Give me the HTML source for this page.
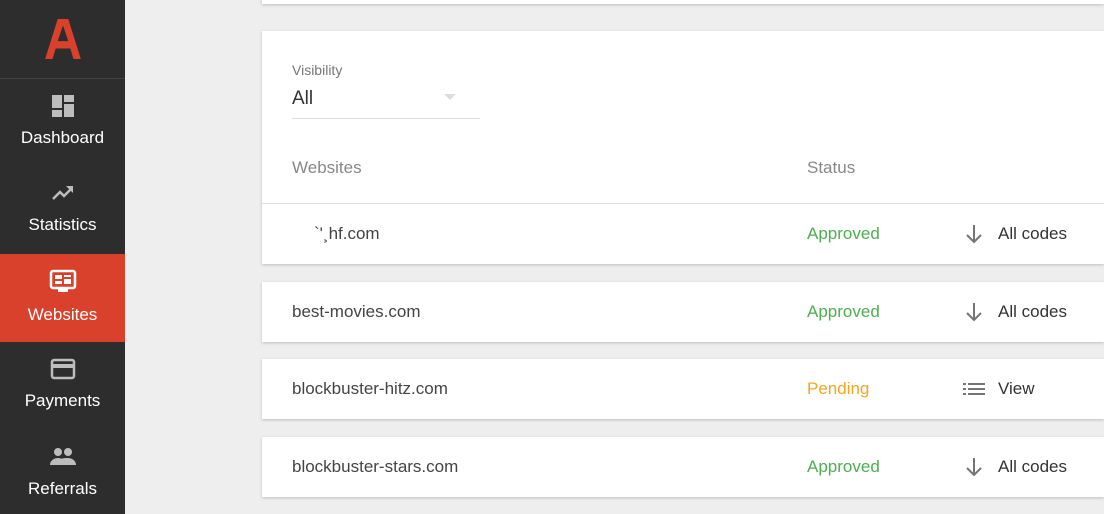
<!DOCTYPE html><html><head><style>
html{overflow:hidden;height:514px}
body{margin:0;width:1104px;height:514px;overflow:hidden;background:#eeeeee;font-family:"Liberation Sans",sans-serif;position:relative}
.sb{position:absolute;left:0;top:0;width:125px;height:514px;background:#2d2d2d}
.logo{height:78px;border-bottom:1px solid #444;display:flex;justify-content:center;align-items:center}
.it{position:absolute;left:0;width:125px;height:88px;text-align:center;color:#fff;font-size:17px}
.it svg{display:block;margin:15px auto 10px}
.card{position:absolute;left:262px;right:0;background:#fff;box-shadow:0 1px 3px rgba(0,0,0,.2)}
.row{height:60px}
.row .n{position:absolute;left:30px;top:20px;font-size:17px;color:#444}
.row .s{position:absolute;left:545px;top:20px;font-size:17px}
.row .a{position:absolute;left:700px;top:18px;font-size:17px;color:#333;display:flex;align-items:center;gap:12px}
.g{color:#4caf50}.o{color:#f5a623}
</style></head><body>
<div class="sb">
<div class="logo"><svg width="42" height="42" viewBox="0 0 40 40"><path d="M3 39 L15 1 H25 L37 39 H30 L27 29 H13 L10 39 Z M15 22 H25 L20 7 Z" fill="#d9412c"/></svg></div>
<div class="it" style="top:79px"><svg width="24" height="24" viewBox="0 0 24 24"><path fill="#bdbdbd" d="M1 1h10v13H1zM13 1h10v7H13zM13 10h10v13H13zM1 16h10v7H1z"/></svg>Dashboard</div>
<div class="it" style="top:166px"><svg width="24" height="24" viewBox="0 0 24 24"><path fill="none" stroke="#bdbdbd" stroke-width="2.5" d="M2 18l7-7 4 4 8-8"/><path fill="#bdbdbd" d="M15 5h7v7z"/></svg>Statistics</div>
<div class="it" style="top:254px;background:#d9412c"><svg width="28" height="26" viewBox="0 0 28 26"><rect x="2" y="2" width="24" height="17" rx="2" fill="none" stroke="#fff" stroke-width="2.5"/><path fill="#fff" d="M6 6h7v4H6zM15 6h7v2h-7zM15 10h7v5h-7zM6 12h7v3H6zM9 19h10v4H9z"/></svg>Websites</div>
<div class="it" style="top:342px"><svg width="26" height="24" viewBox="0 0 26 24"><rect x="2" y="3" width="22" height="18" rx="2" fill="none" stroke="#bdbdbd" stroke-width="2.5"/><rect x="2" y="7" width="22" height="4" fill="#bdbdbd"/></svg>Payments</div>
<div class="it" style="top:430px"><svg width="28" height="24" viewBox="0 0 28 24"><circle cx="9" cy="7" r="4" fill="#bdbdbd"/><circle cx="19" cy="7" r="4" fill="#bdbdbd"/><path fill="#bdbdbd" d="M1 20c0-5 5-7 8-7s8 2 8 7zM15 20c0-3-1-5-3-6 2-1 5-1 7-1 3 0 8 2 8 7z"/></svg>Referrals</div>
</div>
<div class="card" style="top:-10px;height:14px"></div>
<div class="card" style="top:31px;height:233px">
<div style="position:absolute;left:30px;top:31px;font-size:14px;color:#777">Visibility</div>
<div style="position:absolute;left:30px;top:57px;font-size:19px;color:#333">All</div>
<div style="position:absolute;left:182px;top:63px;width:0;height:0;border-left:6px solid transparent;border-right:6px solid transparent;border-top:6px solid #ddd"></div>
<div style="position:absolute;left:30px;top:87px;width:188px;border-top:1px solid #ddd"></div>
<div style="position:absolute;left:30px;top:127px;font-size:17px;color:#888">Websites</div>
<div style="position:absolute;left:545px;top:127px;font-size:17px;color:#888">Status</div>
<div style="position:absolute;left:0;right:0;top:172px;border-top:1px solid #ddd"></div>
<div class="row" style="position:absolute;top:173px;left:0;right:0"><span class="n" style="left:52px">`'¸hf.com</span><span class="s g">Approved</span><span class="a"><svg width="24" height="24" viewBox="0 0 24 24"><path d="M12 3v17M5 13l7 7 7-7" fill="none" stroke="#757575" stroke-width="2"/></svg>All codes</span></div>
</div>
<div class="card row" style="top:282px"><span class="n">best-movies.com</span><span class="s g">Approved</span><span class="a"><svg width="24" height="24" viewBox="0 0 24 24"><path d="M12 3v17M5 13l7 7 7-7" fill="none" stroke="#757575" stroke-width="2"/></svg>All codes</span></div>
<div class="card row" style="top:359px"><span class="n">blockbuster-hitz.com</span><span class="s o">Pending</span><span class="a"><svg width="24" height="24" viewBox="0 0 24 24"><path fill="#757575" d="M1 6h3v2H1zM6 6h17v2H6zM1 11h3v2H1zM6 11h17v2H6zM1 16h3v2H1zM6 16h17v2H6z"/></svg>View</span></div>
<div class="card row" style="top:437px"><span class="n">blockbuster-stars.com</span><span class="s g">Approved</span><span class="a"><svg width="24" height="24" viewBox="0 0 24 24"><path d="M12 3v17M5 13l7 7 7-7" fill="none" stroke="#757575" stroke-width="2"/></svg>All codes</span></div>
</body></html>
